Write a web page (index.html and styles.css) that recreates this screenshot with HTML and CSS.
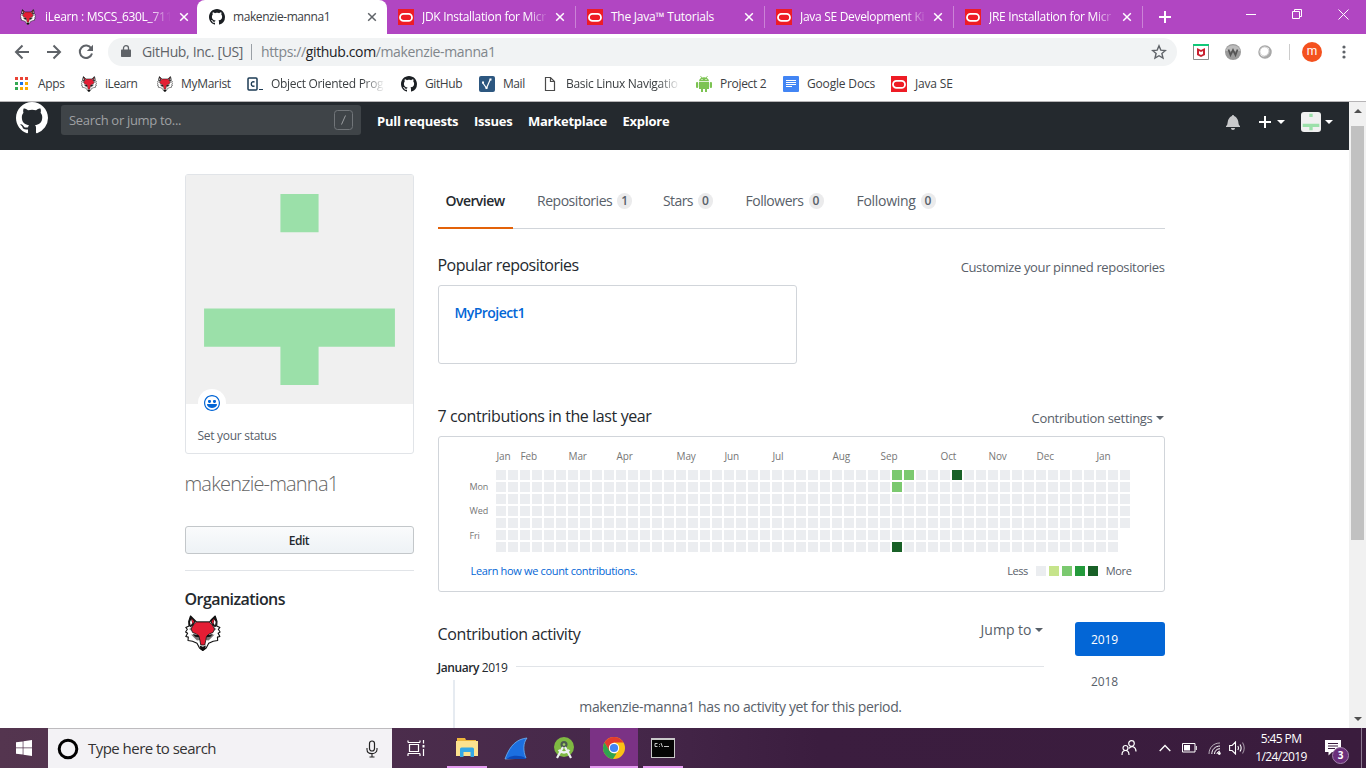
FILE: index.html
```html
<!DOCTYPE html>
<html lang="en">
<head>
<meta charset="utf-8">
<title>makenzie-manna1</title>
<link rel="stylesheet" href="styles.css">
</head>
<body>
<svg class="defs" aria-hidden="true">
  <symbol id="octocat" viewBox="0 0 16 16"><path fill="currentColor" fill-rule="evenodd" d="M8 0C3.58 0 0 3.58 0 8c0 3.54 2.29 6.53 5.47 7.59.4.07.55-.17.55-.38 0-.19-.01-.82-.01-1.49-2.01.37-2.53-.49-2.69-.94-.09-.23-.48-.94-.82-1.13-.28-.15-.68-.52-.01-.53.63-.01 1.08.58 1.23.82.72 1.21 1.87.87 2.33.66.07-.52.28-.87.51-1.07-1.78-.2-3.64-.89-3.64-3.95 0-.87.31-1.59.82-2.15-.08-.2-.36-1.02.08-2.12 0 0 .67-.21 2.2.82.64-.18 1.32-.27 2-.27.68 0 1.36.09 2 .27 1.53-1.04 2.2-.82 2.2-.82.44 1.1.16 1.92.08 2.12.51.56.82 1.27.82 2.15 0 3.07-1.87 3.75-3.65 3.95.29.25.54.73.54 1.48 0 1.07-.01 1.93-.01 2.2 0 .21.15.46.55.38A8.013 8.013 0 0016 8c0-4.42-3.58-8-8-8z"/></symbol>
  <symbol id="fox" viewBox="0 0 36 36">
    <path fill="#fff" stroke="#111" stroke-width="1.1" stroke-linejoin="round" d="M5.500 1 3.700 6.500 4 11 .8 12.500l1.600 1.800L.6 17l2 1.200L.8 21.500l2.500.6-.3 3.400 4.500.7 4.500 2L14.500 33l3.300 2.500L21.200 33l2.500-4.800 4.500-2 4.500-.7-.3-3.400 2.500-.6-1.800-3.300 2-1.200-1.800-2.700 1.600-1.800-3.200-1.500.3-4.500L30.200 1 26 5l-1.500 2h-13L9.500 5z"/>
    <path fill="#777" d="M6 19.500l8 1.500 1 4-3 .5zM29.600 19.500l-8 1.500-1 4 3 .5z"/>
    <path fill="#999" d="M4 14l3-2-.5 4zM31.600 14l-3-2 .5 4z"/>
    <path fill="#e41e34" stroke="#111" stroke-width=".8" stroke-linejoin="round" d="M11.500 7h12.600l3.400 3 2 4-1.500 3.500-4 1.500-2.500 2.500-1.700 8.500h-4l-1.700-8.500-2.500-2.500-4-1.500L6.100 14l2-4z"/>
    <path fill="#111" d="M7.500 19l6 1 .8 2.300-4-.6zM28.100 19l-6 1-.8 2.300 4-.6zM14.800 30.500l3 1.200 3-1.200-.5 3.500-2.500 1.700L15.300 34zM5.500 1l5.200 5.300-2.500 4-2.500 2L4 11l-.3-4.500zM30.200 1L25 6.300l2.500 4 2.500 2 1.600-1.300.3-4.500z"/>
    <path fill="#fff" d="M6.200 4.500l1 3.500-1.500 2.500L5 7zM29.500 4.500l-1 3.500 1.500 2.500.7-3.500z"/>
    <path fill="#e41e34" d="M6.500 3.500l2.700 3-1.500 2.700zM29.200 3.500l-2.700 3L28 9.200z"/>
  </symbol>
  <symbol id="oracle" viewBox="0 0 16 16"><path fill="#ee1c25" d="M0 0h16v16H0z"/><rect x="2" y="4.900" width="12" height="7" rx="3.500" fill="none" stroke="#fff" stroke-width="1.800"/></symbol>
  <symbol id="close" viewBox="0 0 10 10"><path d="M1.200 1.200l7.600 7.600M8.800 1.200L1.200 8.800" stroke="currentColor" stroke-width="1.500" fill="none"/></symbol>
  <symbol id="identicon" viewBox="0 0 12 12"><path fill="#f0f0f0" d="M0 0h12v12H0z"/><path fill="#9be0a9" d="M5 1h2v2H5zM1 7h10v2H7v2H5V9H1z"/></symbol>
</svg>

<header class="tabstrip">
  <div class="tab"><svg class="i16"><use href="#fox"/></svg><span class="title faded">iLearn : MSCS_630L_711</span><svg class="x"><use href="#close"/></svg></div>
  <div class="tab active"><svg class="i16"><use href="#octocat"/></svg><span class="title">makenzie-manna1</span><svg class="x"><use href="#close"/></svg></div>
  <div class="tab"><svg class="i16"><use href="#oracle"/></svg><span class="title faded">JDK Installation for Micr</span><svg class="x"><use href="#close"/></svg></div>
  <div class="tab ruled"><svg class="i16"><use href="#oracle"/></svg><span class="title java">The Java™ Tutorials</span><svg class="x"><use href="#close"/></svg></div>
  <div class="tab ruled"><svg class="i16"><use href="#oracle"/></svg><span class="title faded">Java SE Development Ki</span><svg class="x"><use href="#close"/></svg></div>
  <div class="tab ruled"><svg class="i16"><use href="#oracle"/></svg><span class="title faded">JRE Installation for Micr</span><svg class="x"><use href="#close"/></svg></div>
  <div class="newtab"><svg width="12" height="12" viewBox="0 0 12 12"><path d="M6 0v12M0 6h12" stroke="#fff" stroke-width="2"/></svg></div>
  <div class="winctl">
    <svg width="11" height="11"><path d="M0 5.500h10" stroke="#fff"/></svg>
    <svg width="11" height="11"><path d="M.5 2.500h7v7h-7zM2.500 2V.5h7v7H8" fill="none" stroke="#fff"/></svg>
    <svg width="11" height="11"><path d="M.5.5l10 10M10.500.5l-10 10" stroke="#fff"/></svg>
  </div>
</header>

<div class="toolbar">
  <div class="navbtns">
    <svg width="16" height="16" viewBox="0 0 16 16"><path d="M15 8H2.500M8.500 1.500L2 8l6.500 6.500" /></svg>
    <svg width="16" height="16" viewBox="0 0 16 16"><path d="M1 8h12.500M7.500 1.500L14 8l-6.500 6.500" /></svg>
    <svg width="16" height="16" viewBox="0 0 16 16"><path d="M13.300 4.500A6.200 6.200 0 1 0 14 9.500"/><path class="fill" d="M15 .8v6.200H8.800z"/></svg>
  </div>
  <div class="omnibox">
    <svg width="10" height="13" viewBox="0 0 10 13"><path fill="#5f6368" d="M1 4.500h8c.6 0 1 .4 1 1V11c0 .6-.4 1-1 1H1c-.6 0-1-.4-1-1V5.500c0-.6.4-1 1-1z"/><path d="M2.500 5V3a2.500 2.300 0 0 1 5 0v2" fill="none" stroke="#5f6368" stroke-width="1.300"/></svg>
    <span class="site">GitHub, Inc. [US]</span>
    <span class="url">https://<em>github.com</em>/makenzie-manna1</span>
    <svg width="16" height="16" viewBox="0 0 16 16"><path d="M8 1.800l1.800 4.300 4.600.4-3.500 3 1.100 4.600L8 11.700l-4 2.400 1.100-4.600-3.500-3 4.600-.4z" fill="none" stroke="#5f6368" stroke-width="1.400"/></svg>
  </div>
  <div class="extensions">
    <svg width="16" height="16" viewBox="0 0 16 16"><path fill="#fff" stroke="#8b8b8b" d="M.5.500h15v15H.5z"/><path fill="#10c878" d="M0 0h16v2H0z"/><path fill="#c8202f" d="M4 4l4 2 4-2v7l-4 2-4-2zM6 7v3l2 1 2-1V7L8 8z" fill-rule="evenodd"/></svg>
    <svg width="16" height="16" viewBox="0 0 16 16"><circle cx="8" cy="8" r="8" fill="#9b9b9b"/><path fill="#bcbcbc" d="M.5 7a7.600 7 0 0 1 15 0z"/><path d="M3.500 5.500l2 5.500L8 6l2.500 5 2-5.500" fill="none" stroke="#555" stroke-width="1.700"/></svg>
    <svg width="16" height="16" viewBox="0 0 16 16"><circle cx="8" cy="8" r="6" fill="#fff" stroke="#a8a8a8" stroke-width="1.500"/><path fill="#a8a8a8" d="M12 3.500a6 6 0 0 1-8 9C9 13 13 9 12 3.500z"/><circle cx="7.500" cy="7.500" r="4.500" fill="none" stroke="#d3d3d3"/></svg>
    <i class="vr"></i>
    <span class="profile">m</span>
    <svg width="4" height="14" viewBox="0 0 4 14"><g fill="#5f6368"><circle cx="2" cy="2" r="1.600"/><circle cx="2" cy="7" r="1.600"/><circle cx="2" cy="12" r="1.600"/></g></svg>
  </div>
</div>

<nav class="bookmarks">
  <a><svg width="16" height="16" viewBox="0 0 16 16"><path fill="#ea4335" d="M1 1h3v3H1zM6 1h3v3H6zM11 1h3v3h-3z"/><path fill="#34a853" d="M1 6h3v3H1zM1 11h3v3H1z"/><path fill="#1a73e8" d="M6 6h3v3H6z"/><path fill="#fbab00" d="M11 6h3v3h-3zM6 11h3v3H6zM11 11h3v3h-3z"/></svg><span>Apps</span></a>
  <a><svg class="i16"><use href="#fox"/></svg><span class="tight">iLearn</span></a>
  <a><svg class="i16"><use href="#fox"/></svg><span>MyMarist</span></a>
  <a><svg width="16" height="16" viewBox="0 0 16 16"><rect x="1" y="2" width="9" height="12" rx="1" fill="none" stroke="#1d3b54" stroke-width="1.500"/><path d="M7.500 6.300c-1-.9-3.200-.6-3.200 1.700s2.200 2.600 3.200 1.700" fill="none" stroke="#1d3b54" stroke-width="1.400"/><path d="M12 13.500h4" stroke="#1d3b54"/></svg><span class="cut">Object Oriented Prog</span></a>
  <a><svg class="i16"><use href="#octocat"/></svg><span class="tight">GitHub</span></a>
  <a><svg width="16" height="16" viewBox="0 0 16 16"><rect width="16" height="16" rx="2" fill="#2d5780"/><path d="M3.500 6.500L7.500 12l4-9" fill="none" stroke="#fff" stroke-width="1.200"/><path fill="#fff" d="M3 5.500h2v2H3zM6.500 11h2v2h-2zM10.500 2.500h2v2h-2z"/></svg><span class="tight">Mail</span></a>
  <a><svg width="16" height="16" viewBox="0 0 16 16"><path d="M3.500 1.500h5l4 4v9h-9zM8.500 1.500v4h4" fill="none" stroke="#4a4a4a" stroke-width="1.200"/></svg><span class="cut">Basic Linux Navigatio</span></a>
  <a><svg width="16" height="16" viewBox="0 0 16 16"><g fill="#7cc352"><path d="M3 6h10v7H3zM3 5.200C3.200 0 12.800 0 13 5.200z"/><rect x="0" y="6" width="2.200" height="6" rx="1"/><rect x="13.800" y="6" width="2.200" height="6" rx="1"/><path d="M5 13h2v3H5zM9 13h2v3H9z"/></g><path d="M4.500 0l1.300 2M11.500 0l-1.300 2" stroke="#7cc352" stroke-width=".8"/><path fill="#fff" d="M5.500 3h1v1h-1zM9.500 3h1v1h-1z"/></svg><span>Project 2</span></a>
  <a><svg width="16" height="16" viewBox="0 0 16 16"><rect width="16" height="16" rx="1" fill="#4285f4"/><path d="M3 4.500h10M3 6.500h10M3 8.500h10M3 10.500h6" stroke="#fff"/></svg><span class="loose">Google Docs</span></a>
  <a><svg class="i16"><use href="#oracle"/></svg><span class="loose">Java SE</span></a>
</nav>

<div class="viewport">
  <div class="page">
    <header class="gh-header">
      <svg class="mark"><use href="#octocat"/></svg>
      <div class="search"><span>Search or jump to...</span><svg width="19" height="20" viewBox="0 0 19 20"><rect x=".5" y=".5" width="18" height="19" rx="3" fill="none" stroke="#717579"/><path d="M11.500 5.500l-4 9" stroke="#9a9da0"/></svg></div>
      <nav class="gh-nav"><a>Pull requests</a><a>Issues</a><a>Marketplace</a><a>Explore</a></nav>
      <div class="gh-user">
        <svg width="14" height="16" viewBox="0 0 14 16"><path fill="#c8c9cb" d="M14 12v1H0v-1l.73-.58c.77-.77.81-2.550 1.190-4.420C2.690 3.230 6 2 6 2c0-.55.45-1 1-1s1 .45 1 1c0 0 3.390 1.230 4.160 5 .38 1.880.42 3.660 1.190 4.420l.66.58H14zm-7 4c1.110 0 2-.89 2-2H5c0 1.110.89 2 2 2z"/></svg>
        <span class="plus"><svg width="12" height="12" viewBox="0 0 12 12"><path d="M6 0v12M0 6h12" stroke="#fff" stroke-width="2"/></svg><i class="caret"></i></span>
        <span class="me"><svg width="20" height="20"><use href="#identicon"/></svg><i class="caret"></i></span>
      </div>
    </header>

    <div class="container">
      <aside class="sidebar">
        <div class="vcard">
          <svg class="avatar"><use href="#identicon"/></svg>
          <div class="status"><span class="smile"><svg width="16" height="16" viewBox="0 0 16 16"><path fill="#0366d6" fill-rule="evenodd" d="M8 0C3.580 0 0 3.580 0 8s3.580 8 8 8 8-3.580 8-8-3.580-8-8-8zm4.810 12.810a6.720 6.720 0 0 1-2.170 1.450c-.83.36-1.720.53-2.640.53-.92 0-1.810-.17-2.640-.53-.81-.34-1.550-.83-2.170-1.450a6.773 6.773 0 0 1-1.450-2.170A6.590 6.590 0 0 1 1.210 8c0-.92.17-1.810.53-2.640.34-.81.83-1.550 1.450-2.170.62-.62 1.360-1.110 2.170-1.450A6.590 6.590 0 0 1 8 1.210c.92 0 1.810.17 2.640.53.81.34 1.550.83 2.170 1.450.62.62 1.110 1.360 1.450 2.170.36.83.53 1.720.53 2.640 0 .92-.17 1.810-.53 2.640-.34.81-.83 1.550-1.450 2.170zM4 6.800v-.59c0-.66.53-1.190 1.200-1.190h.59c.66 0 1.190.53 1.190 1.190v.59c0 .67-.53 1.200-1.190 1.200H5.200C4.530 8 4 7.470 4 6.800zm5 0v-.59c0-.66.53-1.190 1.200-1.190h.59c.66 0 1.190.53 1.190 1.190v.59c0 .67-.53 1.200-1.190 1.200h-.59C9.530 8 9 7.470 9 6.800zm4 3.200c-.72 1.880-2.910 3-5 3s-4.280-1.130-5-3c-.14-.39.23-1 .66-1h8.590c.41 0 .89.61.75 1z"/></svg></span><span>Set your status</span></div>
        </div>
        <h1>makenzie-manna1</h1>
        <button class="edit">Edit</button>
        <hr>
        <h2>Organizations</h2>
        <svg class="org"><use href="#fox"/></svg>
      </aside>

      <main class="main">
        <nav class="profile-nav">
          <a class="selected">Overview</a>
          <a><b>Repositories</b><i>1</i></a>
          <a><b class="tight">Stars</b><i>0</i></a>
          <a><b>Followers</b><i>0</i></a>
          <a><b class="loose">Following</b><i>0</i></a>
        </nav>
        <div class="row popular"><h3>Popular repositories</h3><a>Customize your pinned repositories</a></div>
        <div class="repo">MyProject1</div>
        <div class="row contrib"><h3>7 contributions in the last year</h3><a>Contribution settings<i class="caret"></i></a></div>
        <section class="graph">
          <div class="months" id="months"></div>
          <div class="calendar">
            <div class="days"><span>Mon</span><span>Wed</span><span>Fri</span></div>
            <div class="cells" id="cells"></div>
          </div>
          <div class="legend">
            <a>Learn how we count contributions.</a>
            <span class="scale"><b class="less">Less</b><i class="l0"></i><i class="l1"></i><i class="l2"></i><i class="l3"></i><i class="l4"></i><b class="more">More</b></span>
          </div>
        </section>
        <section class="activity">
          <div class="feed">
            <div class="row"><h3>Contribution activity</h3><a class="jump">Jump to<i class="caret"></i></a></div>
            <div class="month"><span><strong>January</strong> 2019</span></div>
            <div class="timeline"><span>makenzie-manna1 has no activity yet for this period.</span></div>
          </div>
          <div class="years"><a class="on">2019</a><a>2018</a></div>
        </section>
      </main>
    </div>
  </div>
  <div class="scrollbar">
    <svg width="8" height="4"><path fill="#505050" d="M4 0l4 4H0z"/></svg>
    <div class="thumb"></div>
    <svg width="8" height="4"><path fill="#505050" d="M0 0h8L4 4z"/></svg>
  </div>
</div>

<footer class="taskbar">
  <div class="start"><svg width="16" height="16" viewBox="0 0 16 16"><path fill="#fff" d="M0 2.300l6.700-.9v6.200H0zM7.400 1.300L16 0v7.600H7.400zM0 8.300h6.700v6.300L0 13.700zM7.400 8.300H16V16l-8.600-1.200z"/></svg></div>
  <div class="find">
    <svg width="22" height="22" viewBox="0 0 22 22"><circle cx="11" cy="11" r="8.800" fill="none" stroke="#000" stroke-width="3"/></svg>
    <span>Type here to search</span>
    <svg width="12" height="18" viewBox="0 0 12 18"><rect x="3.500" y="1" width="5" height="10" rx="2.500" fill="none" stroke="#222" stroke-width="1.200"/><path d="M1 8v1.500c0 5.500 10 5.500 10 0V8M6 13.500V17M3.500 17h5" fill="none" stroke="#222" stroke-width="1.100"/></svg>
  </div>
  <div class="apps">
    <span class="view"><svg width="18" height="16" viewBox="0 0 18 16"><path d="M2.500 4.500h9v7h-9zM1 2.500V.5M1 2.500h12M13 2.500V.5M1 13.500h12M1 13.500V16M13 13.500V16M16.500 0v3.500M16.500 9v7" fill="none" stroke="#fff" stroke-width="1.200"/><path fill="#fff" d="M15.500 5h2v2.500h-2z"/></svg></span>
    <span class="open"><svg width="22" height="20" viewBox="0 0 22 20"><path fill="#eeb63c" d="M1 0h8l1 2h10v4H1z"/><path fill="#fde28f" d="M0 3h22v15H0z"/><path fill="#35a8e6" d="M4 11q0-1.500 1.500-1.500h11Q18 9.500 18 11v8h-3.500v-5h-7v5H4z"/></svg></span>
    <span><svg width="24" height="23" viewBox="0 0 24 23"><path fill="#1c6fe0" stroke="#6db3f2" stroke-width=".8" d="M1 22C6 8 13 2 23 1c-4 5-4 13-1 20z"/><path fill="#0d4ab8" d="M2 22c6-4 13-4 20-1v1z"/></svg></span>
    <span><svg width="22" height="24" viewBox="0 0 22 24"><circle cx="11" cy="11" r="10" fill="#7fb842"/><circle cx="11" cy="8.500" r="3.500" fill="#4c5a50"/><circle cx="11" cy="8.500" r="1.300" fill="#9fd060"/><path d="M10 11L4 22M12 11l6 11M5.500 14q5.500 5 11 0" fill="none" stroke="#eef1f0" stroke-width="2.200"/></svg></span>
    <span class="current"><svg width="22" height="22" viewBox="0 0 22 22"><circle cx="11" cy="11" r="11" fill="#fbc116"/><path fill="#e33b2e" d="M1.500 5.500a11 11 0 0 1 19 0H11l-5 8z"/><path fill="#30a350" d="M1.500 5.500l5 8.500 4.500 2.500h2.500L10 22A11 11 0 0 1 1.500 5.500z"/><circle cx="11" cy="11" r="5.200" fill="#fff"/><circle cx="11" cy="11" r="4.100" fill="#4285f4"/></svg></span>
    <span class="open"><svg width="24" height="20" viewBox="0 0 24 20"><path fill="#c9c9c9" d="M0 0h24v20H0z"/><path fill="#050505" d="M1 2h22v17H1z"/><path d="M6.500 5.500H4v3h2.500M8.500 6v.8M8.500 8v.8M10 5l1.500 4M13 8.500h5" fill="none" stroke="#ddd" stroke-width=".9"/></svg></span>
  </div>
  <div class="tray">
    <svg class="people" width="16" height="16" viewBox="0 0 16 16"><g fill="none" stroke="#fff" stroke-width="1.200"><circle cx="10.500" cy="3.500" r="2.800"/><circle cx="4.500" cy="8" r="2.500"/><path d="M1 15c0-6 7-6 7 0M8 8.500c2-3.500 7-2 7 3"/></g></svg>
    <svg width="12" height="8" viewBox="0 0 12 8"><path d="M.7 7L6 1.500 11.300 7" fill="none" stroke="#fff" stroke-width="1.300"/></svg>
    <svg width="15" height="10" viewBox="0 0 15 10"><path d="M.5.500h12.500v8.500H.5zM14.300 3v4" fill="none" stroke="#fff"/><path fill="#fff" d="M2 2h6v5.500H2z"/></svg>
    <svg class="wifi" width="13" height="13" viewBox="0 0 13 13"><g fill="none" stroke="#fff"><path opacity=".65" d="M1 12C1 5.500 5.500 1 12 1"/><path d="M3.800 12c0-4.500 3.500-8 8.200-8M6.500 12c0-3 2.300-5.300 5.500-5.300M9 12c0-1.600 1.200-2.800 3-2.800"/></g><circle cx="11.300" cy="11.500" r="1.400" fill="#fff"/></svg>
    <svg class="sound" width="17" height="14" viewBox="0 0 17 14"><g fill="none" stroke="#fff" stroke-width="1.100"><path d="M.6 4.500h2.500L6.500 1v12L3.100 9.500H.6zM8.800 5q1.300 2 0 4M11 3.500q2.300 3.500 0 7"/><path opacity=".5" d="M13.500 1.500q3.500 5.500 0 11"/></g></svg>
    <div class="clock"><span>5:45 PM</span><span>1/24/2019</span></div>
    <div class="notice"><svg width="16" height="16" viewBox="0 0 16 16"><path fill="#fff" d="M0 0h16v12H7l-3.500 3.500V12H0z"/><path d="M3 3.500h10M3 6h10M3 8.500h7" stroke="#3a1d3e"/></svg><b>3</b></div>
  </div>
</footer>
<script src="calendar.js"></script>
</body>
</html>
```
FILE: calendar.js
```js
// Month labels: [week column, name]
const months = [[0, 'Jan'], [2, 'Feb'], [6, 'Mar'], [10, 'Apr'], [15, 'May'], [19, 'Jun'], [23, 'Jul'], [28, 'Aug'], [32, 'Sep'], [37, 'Oct'], [41, 'Nov'], [45, 'Dec'], [50, 'Jan']];
const monthRow = document.getElementById('months');
months.forEach(([week, name]) => {
  const label = document.createElement('span');
  label.textContent = name;
  label.style.gridColumnStart = week + 1;
  monthRow.append(label);
});

// Contribution levels keyed by "week-day"
const levels = { '33-0': 2, '33-1': 2, '33-6': 4, '34-0': 2, '38-0': 4 };
const cells = document.getElementById('cells');
for (let week = 0; week < 53; week++) {
  for (let day = 0; day < (week === 52 ? 5 : 7); day++) {
    const cell = document.createElement('i');
    cell.className = 'l' + (levels[week + '-' + day] || 0);
    cells.append(cell);
  }
}
```
FILE: styles.css
```css
* { box-sizing: border-box; }
body { margin: 0; width: 1366px; height: 768px; overflow: hidden; font-family: "Open Sans", "Noto Sans", sans-serif; background: #fff; color: #24292e; display: flex; flex-direction: column; }
b, i, em { font-weight: inherit; font-style: normal; }
svg { display: block; flex: none; }
span, a, b, h3 { white-space: nowrap; }
.defs { display: none; }
.i16 { width: 16px; height: 16px; }
.caret { border: 4px solid transparent; border-top-color: currentColor; border-bottom: 0; width: 0; height: 0; }

/* Browser tabs */
.tabstrip { height: 34px; flex: none; background: #b146c2; display: flex; padding-left: 8px; color: #fff; font-size: 12px; }
.tab { width: 189px; height: 34px; padding: 0 10px 0 12px; display: flex; align-items: center; gap: 8px; }
.title { width: 129px; line-height: 18px; letter-spacing: -.42px; }
.java { letter-spacing: -.24px; }
.faded { -webkit-mask-image: linear-gradient(90deg, #000 105px, transparent 127px); mask-image: linear-gradient(90deg, #000 105px, transparent 127px); letter-spacing: -.3px; }
.tab:first-child .title { width: 128px; padding-left: 1px; }
.x { width: 10px; height: 10px; }
.active { background: #fff; color: #3c4043; border-radius: 8px 8px 0 0; width: 190px; margin-right: -1px; }
.active .title, .tab:first-child .title { width: 127px; }
.active .i16 { color: #1b1f23; }
.active .x { color: #5f6368; }
.ruled { border-left: 1px solid #cb83d6; padding-left: 11px; border-image: linear-gradient(transparent 7px, #cb83d6 7px 27px, transparent 27px) 1; }
.newtab { width: 45px; border-left: 1px solid; border-image: linear-gradient(transparent 7px, #cb83d6 7px 27px, transparent 27px) 1; display: flex; align-items: center; justify-content: center; }
.winctl { margin-left: auto; display: flex; gap: 35px; padding: 9px 17px 0 0; }

/* Address bar */
.toolbar { height: 35px; flex: none; display: flex; align-items: center; }
.navbtns { width: 108px; padding-left: 14px; display: flex; gap: 16px; }
.navbtns path { fill: none; stroke: #5f6368; stroke-width: 2; }
.navbtns .fill { fill: #5f6368; stroke: none; }
.omnibox { width: 1069px; height: 28px; border-radius: 14px; background: #f1f3f4; display: flex; align-items: center; padding: 0 10px 0 13px; font-size: 14px; color: #5f6368; }
.site { margin-left: 11px; width: 110px; border-right: 1px solid #9aa0a6; line-height: 16px; letter-spacing: -.35px; }
.url { margin-left: 9px; flex: 1; color: #80868b; letter-spacing: -.37px; }
.url em { color: #202124; }
.extensions { display: flex; align-items: center; padding-left: 16px; }
.extensions svg { margin-right: 16px; }
.vr { width: 1px; height: 16px; background: #ccc; margin: 0 12px 0 0; }
.profile { width: 20px; height: 20px; border-radius: 50%; background: #f4511e; color: #fff; font: 12px/18px Roboto, sans-serif; text-align: center; margin-right: 20px; }
.extensions svg:last-child { margin: 0; }

.bookmarks { height: 33px; flex: none; border-bottom: 1px solid #b6b4b6; display: grid; grid-template-columns: 67px 76px 90px 154px 78px 63px 154px 87px 108px 80px; padding: 0 0 2px 14px; align-items: center; font-size: 12px; color: #3c4043; letter-spacing: -.3px; }
.bookmarks a { display: flex; gap: 8px; align-items: center; }
.bookmarks span { line-height: 16px; padding-bottom: 1px; }
.bookmarks .i16 { color: #1b1f23; }
.bookmarks .tight { letter-spacing: -.42px; }
.bookmarks .loose { letter-spacing: -.17px; }
.cut { width: 113px; -webkit-mask-image: linear-gradient(90deg, #000 92px, transparent 114px); mask-image: linear-gradient(90deg, #000 92px, transparent 114px); }

/* Page */
.viewport { height: 626px; flex: none; display: flex; overflow: hidden; }
.page { width: 1349px; }
.gh-header { height: 48px; background: #24292e; display: flex; padding-left: 16px; color: #fff; font-size: 13px; letter-spacing: -.31px; }
.mark { width: 32px; height: 32px; margin-right: 13px; }
.search { width: 300px; height: 30px; margin-top: 3px; border-radius: 3px; background: #3f4448; color: #9fa1a4; padding: 0 8px; display: flex; align-items: center; justify-content: space-between; }
.gh-nav { display: grid; grid-template-columns: 97px 54px 94.500px 60px; padding-left: 16px; height: 38px; align-items: center; font-weight: 700; line-height: 18px; letter-spacing: -.26px; }
.gh-user { margin-left: auto; height: 40px; display: flex; align-items: center; padding-right: 16px; }
.plus { display: flex; align-items: center; gap: 6px; margin: 0 16px 0 19px; }
.me { display: flex; align-items: center; gap: 4px; }
.me svg { border-radius: 3px; }

.container { width: 980px; margin: 24px auto 0; display: flex; gap: 24px; }
.sidebar { width: 229px; }
.vcard { height: 280px; border: 1px solid #e1e4e8; border-radius: 3px; overflow: hidden; }
.avatar { width: 229px; height: 229px; margin-left: -1px; background: #f0f0f0; }
.status { position: relative; padding: 23px 12px 0; font-size: 12px; line-height: 18px; color: #586069; letter-spacing: -.29px; }
.smile { position: absolute; left: 12px; top: -15px; width: 28px; height: 28px; border-radius: 50%; background: #fff; display: grid; place-items: center; }
h1 { margin: 16px 0 29px; font-size: 20px; line-height: 27px; font-weight: 300; color: #666; letter-spacing: -.8px; }
.edit { display: block; width: 229px; height: 28px; border: 1px solid #c3c7ca; border-radius: 3px; background: linear-gradient(#fafbfc, #eff3f6 90%); font: 600 12px/20px "Open Sans", sans-serif; color: #24292e; padding: 2px 0 0; letter-spacing: -.5px; }
hr { margin: 16px 0 17px; border: 0; border-top: 1px solid #e1e4e8; }
h2 { margin: 0 0 5px; font-size: 16px; line-height: 22px; font-weight: 600; letter-spacing: -.56px; }
.org { width: 36px; height: 36px; }

.main { width: 727px; }
.profile-nav { height: 55px; border-bottom: 1px solid #d1d5da; display: grid; grid-template-columns: 91.500px 126px 82.500px 111px 120px; font-size: 14px; color: #586069; letter-spacing: -.47px; }
.profile-nav a { height: 54px; padding: 0 8px; display: flex; align-items: center; gap: 5px; }
.profile-nav b { padding-bottom: 2px; }
.profile-nav .tight { letter-spacing: -.6px; }
.profile-nav .loose { letter-spacing: -.3px; }
.profile-nav i { min-width: 15px; height: 16px; border-radius: 8px; background: #ebebec; font-size: 12px; line-height: 16px; font-weight: 600; text-align: center; letter-spacing: 0; }
.profile-nav .selected { width: 75px; height: 55px; border-bottom: 2px solid #e36209; padding-bottom: 1px; color: #24292e; font-weight: 600; letter-spacing: -.56px; }
h3 { margin: 0; font-weight: 400; font-size: 16px; line-height: 24px; letter-spacing: -.53px; }
.row { display: flex; justify-content: space-between; align-items: center; }
.row a { font-size: 13px; line-height: 20px; color: #586069; display: flex; align-items: center; gap: 4px; padding-top: 3px; letter-spacing: -.36px; }
.popular { height: 24px; margin-top: 24px; }
.repo { width: 359.500px; height: 79px; margin-top: 8px; border: 1px solid #d1d5da; border-radius: 3px; padding: 17px 16px; font-size: 14px; line-height: 20px; font-weight: 600; color: #0366d6; letter-spacing: -.55px; }
.contrib { height: 24px; margin-top: 40px; }
.contrib h3 { letter-spacing: -.4px; }
.contrib a { letter-spacing: -.31px; margin-right: 1px; gap: 3px; }
.graph { height: 156px; margin-top: 8px; border: 1px solid #d1d5da; border-radius: 3px; padding: 12px 32px 0; }
.months { display: grid; grid-template-columns: repeat(53, 12px); margin-left: 26px; height: 21px; font-size: 10px; line-height: 14px; color: #767676; letter-spacing: -.1px; }
.months span { width: 0; }
.calendar { display: flex; }
.days { width: 25px; padding: 11px 0 0; margin-left: -1px; margin-right: 1px; display: flex; flex-direction: column; gap: 12px; font-size: 9px; line-height: 12px; color: #767676; letter-spacing: -.1px; }
.days span:last-child { padding-top: 1px; }
.cells { display: grid; grid-auto-flow: column; grid-template-rows: repeat(7, 10px); grid-auto-columns: 10px; gap: 2px; }
.l0 { background: #ebedf0; }
.l1 { background: #c6e48b; }
.l2 { background: #7bc96f; }
.l3 { background: #239a3b; }
.l4 { background: #196127; }
.legend { display: flex; justify-content: space-between; font-size: 11px; line-height: 18px; color: #586069; margin-top: 10px; letter-spacing: -.34px; }
.legend a { color: #0366d6; }
.scale { display: flex; align-items: center; gap: 3px; }
.scale i { width: 10px; height: 10px; }
.scale .l0 { margin-left: 5px; }
.less { letter-spacing: -.5px; }
.more { margin-left: 5px; }
.activity { display: flex; justify-content: space-between; margin-top: 30px; }
.feed { width: 606px; }
.feed .row { height: 26px; }
.feed h3 { padding-bottom: 2px; letter-spacing: -.37px; }
.row .jump { margin: -14px 1px 0 0; font-size: 14px; letter-spacing: 0; gap: 3px; }
.month { display: flex; align-items: center; gap: 8px; margin-top: 11px; font-size: 12px; line-height: 18px; letter-spacing: -.41px; }
.month strong { font-weight: 600; }
.month::after { content: ""; flex: 1; height: 1px; background: #e1e4e8; margin-bottom: 3px; }
.timeline { margin: 3px 0 0 15px; height: 60px; border-left: 2px solid #e6ebf1; padding: 17px 17px 0 0; text-align: center; font-size: 14px; line-height: 20px; color: #586069; letter-spacing: -.35px; }
.years { width: 90px; font-size: 12px; color: #586069; }
.years a { display: block; height: 34px; padding: 0 16.500px; line-height: 36px; margin-bottom: 8px; letter-spacing: -.1px; }
.years .on { background: #0366d6; color: #fff; border-radius: 3px; }

.scrollbar { width: 17px; background: #f1f1f1; display: flex; flex-direction: column; align-items: center; padding: 7px 0; }
.thumb { width: 13px; height: 414px; margin: 13px 0 auto; background: #c1c1c1; }

/* Taskbar */
.taskbar { height: 40px; flex: none; background: linear-gradient(90deg, #54354f, #46284a 45%, #3b1d3f 60%, #3a1c3d); display: flex; }
.start { width: 48px; display: grid; place-items: center; }
.find { width: 344px; background: #f3f2f5; border-top: 1px solid #bdbbbe; display: flex; align-items: center; padding: 0 14px 0 9px; gap: 9px; font-size: 15px; color: #333; letter-spacing: -.53px; }
.find span { flex: 1; padding-bottom: 2px; }
.apps { display: flex; }
.apps span { width: 49px; height: 40px; display: grid; place-items: center; }
.apps .view { width: 50px; padding-right: 2px; }
.apps .open { background: linear-gradient(#e49bf0, #e49bf0) 50% 100% / 40px 2px no-repeat; }
.apps span:nth-child(4) { width: 50px; padding-right: 2px; }
.apps .current { width: 48px; background: #7b3285; border-bottom: 2px solid #e49bf0; padding-top: 2px; }
.tray { margin-left: auto; display: flex; align-items: center; color: #fff; border-right: 1px solid #8b7990; margin-right: 4px; }
.tray > svg { margin-right: 11px; }
.tray .people { margin-right: 22px; }
.tray .wifi { margin-right: 8px; }
.tray .sound { margin-right: 8px; }
.clock { width: 54px; font-size: 12px; line-height: 18px; display: flex; flex-direction: column; align-items: center; letter-spacing: -.6px; }
.notice { position: relative; width: 53px; padding-left: 17px; }
.notice b { position: absolute; left: 24px; top: 7px; width: 17px; height: 17px; border-radius: 50%; background: #6b2f7b; border: 1px solid #a284ab; font: 700 10px/15px "Open Sans", sans-serif; text-align: center; }
```
